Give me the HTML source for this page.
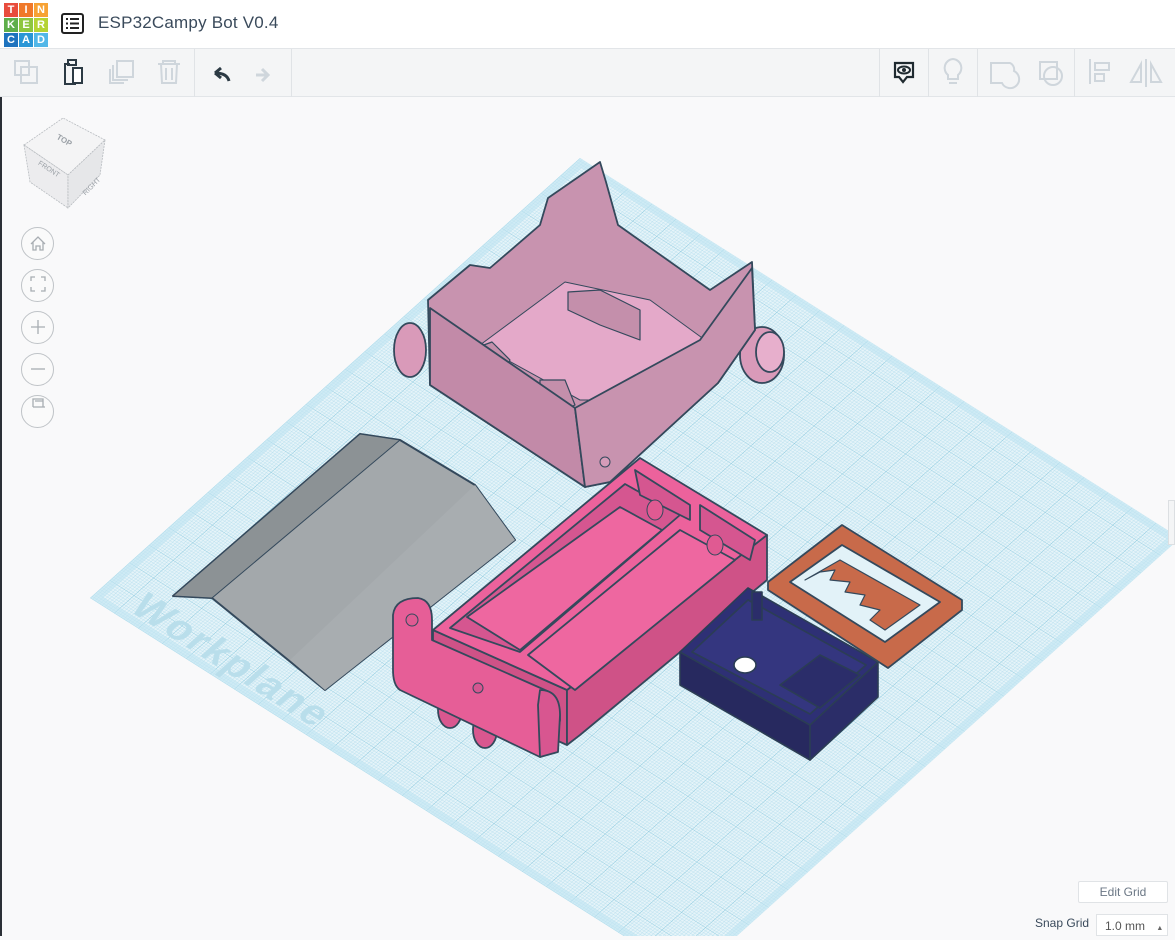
<!DOCTYPE html>
<html><head><meta charset="utf-8"><style>
*{margin:0;padding:0;box-sizing:border-box}
body{width:1175px;height:936px;overflow:hidden;background:#f9f9fa;font-family:"Liberation Sans",sans-serif;position:relative}
#hdr{position:absolute;left:0;top:0;width:1175px;height:49px;background:#fff;border-bottom:1px solid #e2e5e8}
#logo{position:absolute;left:4px;top:3px;width:44px;height:44px;display:grid;grid-template-columns:repeat(3,14px);grid-template-rows:repeat(3,14px);gap:1px}
#logo div{color:#fff;font-weight:bold;font-size:11px;text-align:center;line-height:14px}
#title{position:absolute;left:98px;top:13px;font-size:17px;color:#3a4a5b;letter-spacing:.2px}
#tb{position:absolute;left:0;top:49px;width:1175px;height:48px;background:#f4f5f6;border-bottom:1px solid #e2e5e8}
.sep{position:absolute;top:49px;width:1px;height:48px;background:#e0e3e6}
.circ{position:absolute;left:21px;width:33px;height:33px;border:1px solid #bfc3c7;border-radius:50%;background:#fafafa}
#edit{position:absolute;left:1078px;top:881px;width:90px;height:22px;border:1px solid #e0e3e6;background:#fff;color:#6b7785;font-size:12px;text-align:center;line-height:20px;border-radius:2px}
#snapl{position:absolute;left:1035px;top:916px;font-size:12px;color:#3a4a5b}
#snap{position:absolute;left:1096px;top:914px;width:72px;height:22px;border:1px solid #e0e3e6;background:#fff;color:#555;font-size:12px;line-height:22px;padding-left:8px}
</style></head><body>
<svg width="1175" height="936" style="position:absolute;left:0;top:0">
<defs>
<pattern id="g" width="10" height="10" patternUnits="userSpaceOnUse">
<rect width="10" height="10" fill="#e6f4f9"/>
<g stroke="#a6d8e9" stroke-width="0.12">
<path d="M1 0V10M2 0V10M3 0V10M4 0V10M5 0V10M6 0V10M7 0V10M8 0V10M9 0V10M0 1H10M0 2H10M0 3H10M0 4H10M0 5H10M0 6H10M0 7H10M0 8H10M0 9H10"/>
</g>
<path d="M0 0V10M0 0H10" stroke="#7cc2da" stroke-width="0.3"/>
</pattern>
</defs>
<g transform="matrix(2.4,1.52,1.96,-1.76,90,598)">
<rect x="0" y="0" width="250" height="250" fill="url(#g)"/>
<rect x="1.5" y="1.5" width="247" height="247" fill="none" stroke="#bfe5f1" stroke-width="3" opacity=".6"/>
</g>
<text transform="matrix(0.845,0.535,-0.744,0.668,128,610)" font-size="40" font-weight="bold" fill="#b9deeb" textLength="220" font-family="Liberation Sans,sans-serif">Workplane</text>

<!-- gray ramp -->
<g stroke="#34495c" stroke-width="2" stroke-linejoin="round">
<polygon points="173,596 212,598 325,690 515,540 475,485 400,440 360,434" fill="#a3a8ab"/>
<polygon points="173,596 360,434 400,440 212,598" fill="#8c9295" stroke-width="1"/>
<polygon points="290,660 475,485 515,540 325,690" fill="#a8adb0" stroke="none"/>
</g>

<!-- pink top box -->
<g stroke="#34495c" stroke-width="1.8" stroke-linejoin="round">
<ellipse cx="410" cy="350" rx="16" ry="27" fill="#d99ab9"/>
<ellipse cx="762" cy="355" rx="22" ry="28" fill="#d99ab9"/>
<ellipse cx="770" cy="352" rx="14" ry="20" fill="#e7afcc"/>
<polygon points="428,300 470,265 490,268 540,225 548,198 600,162 606,182 618,225 710,290 752,262 755,330 718,383 610,482 585,487 430,385" fill="#c893af"/>
<polygon points="480,345 565,282 650,300 705,340 600,400 580,400" fill="#e4a9c9" stroke-width="1"/>
<polygon points="568,292 600,290 640,310 640,340 600,325 568,310" fill="#c48fab" stroke-width="1.2"/>
<polygon points="540,380 565,380 575,405 560,412 540,400" fill="#c48fab" stroke-width="1.2"/>
<polygon points="470,350 492,342 510,360 498,382 480,380" fill="#c48fab" stroke-width="1.2"/>
<polygon points="430,308 575,408 585,487 430,385" fill="#c28aa8"/>
<polygon points="575,408 700,340 752,268 755,330 718,383 610,482 585,487" fill="#c893af"/>
<circle cx="605" cy="462" r="5" fill="#d59cb9" stroke-width="1"/>
</g>

<!-- magenta battery box -->
<g stroke="#34495c" stroke-width="1.8" stroke-linejoin="round">
<ellipse cx="450" cy="710" rx="12" ry="18" fill="#d9578f"/>
<ellipse cx="485" cy="730" rx="12" ry="18" fill="#d9578f"/>
<polygon points="433,630 567,690 567,745 433,685" fill="#cf5287"/>
<polygon points="567,690 767,535 767,580 580,735 567,745" fill="#cf5287"/>
<polygon points="433,630 640,458 767,535 567,690" fill="#ec629c"/>
<polygon points="450,628 625,484 680,515 520,652" fill="#d55690"/>
<polygon points="467,617 620,507 662,530 520,650" fill="#ee67a0"/>
<polygon points="528,655 680,530 735,560 575,690" fill="#ee67a0"/>
<polygon points="635,470 690,505 690,520 640,495" fill="#d55690"/>
<polygon points="700,505 755,540 750,560 700,530" fill="#d55690"/>
<ellipse cx="655" cy="510" rx="8" ry="10" fill="#e05a92" stroke-width="1"/>
<ellipse cx="715" cy="545" rx="8" ry="10" fill="#e05a92" stroke-width="1"/>
<path d="M393,615 Q395,598 418,598 Q432,600 432,620 L432,640 L545,690 Q560,695 560,720 L555,750 L540,757 L400,690 Q393,685 393,670 Z" fill="#e65e97"/>
<path d="M540,690 Q560,690 560,715 L558,752 L540,757 L538,705 Z" fill="#d85690"/>
<circle cx="412" cy="620" r="6" fill="#e05a92" stroke-width="1"/>
<circle cx="478" cy="688" r="5" fill="#d55690" stroke-width="1"/>
</g>

<!-- navy box -->
<g stroke="#2b3d55" stroke-width="1.6" stroke-linejoin="round">
<polygon points="680,652 810,725 810,760 680,685" fill="#27295f"/>
<polygon points="810,725 878,662 878,697 810,760" fill="#2b2d68"/>
<polygon points="680,652 748,588 878,662 810,725" fill="#2e3075"/>
<polygon points="692,652 748,600 866,665 810,714" fill="#34367f"/>
<polygon points="752,592 762,592 762,620 752,620" fill="#2b2d6a"/>
<ellipse cx="745" cy="665" rx="11" ry="8" fill="#fff"/>
<polygon points="780,685 820,655 860,675 820,708" fill="#2b2d6a"/>
</g>

<!-- orange frame -->
<g stroke="#34495c" stroke-width="1.8" stroke-linejoin="round">
<polygon points="768,582 842,525 962,600 962,610 888,668 768,590" fill="#c86a4a"/>
<polygon points="790,582 842,545 940,602 885,642" fill="#e2f2f8"/>
<polygon points="805,580 840,560 920,605 885,630 870,620 880,610 860,605 865,595 845,592 850,582 830,580 835,570 820,572" fill="#c86a4a" stroke-width="1.2"/>
</g>

<!-- nav cube -->
<g stroke="#b8bcc0" stroke-width="0.8" stroke-dasharray="2,1">
<polygon points="24,145 63,118 105,140 68,175" fill="#f4f4f5"/>
<polygon points="24,145 68,175 68,208 30,182" fill="#ececee"/>
<polygon points="68,175 105,140 100,175 68,208" fill="#e6e7e9"/>
</g>
<text x="55" y="142" font-size="8" fill="#9aa0a6" transform="rotate(30 62 142)" font-weight="bold">TOP</text>
<text x="33" y="170" font-size="7" fill="#9aa0a6" transform="rotate(33 45 175)">FRONT</text>
<text x="74" y="192" font-size="7" fill="#9aa0a6" transform="rotate(-45 84 180)">RIGHT</text>
</svg>

<div id="hdr">
<div id="logo">
<div style="background:#e84c3d">T</div><div style="background:#f0792a">I</div><div style="background:#f7a234">N</div>
<div style="background:#5fae4a">K</div><div style="background:#8dc63f">E</div><div style="background:#b5d334">R</div>
<div style="background:#1e73be">C</div><div style="background:#2a96d6">A</div><div style="background:#52b7e8">D</div>
</div>
<svg style="position:absolute;left:61px;top:13px" width="24" height="22"><rect x="1" y="1" width="21" height="19" rx="2" fill="none" stroke="#222" stroke-width="2"/><path d="M5 6h2M9 6h9M5 10.5h2M9 10.5h9M5 15h2M9 15h9" stroke="#222" stroke-width="2"/></svg>
<div id="title">ESP32Campy Bot V0.4</div>
</div>
<div id="tb"></div>
<div class="sep" style="left:194px"></div><div class="sep" style="left:291px"></div>
<div class="sep" style="left:879px"></div><div class="sep" style="left:928px"></div><div class="sep" style="left:977px"></div><div class="sep" style="left:1074px"></div>
<svg style="position:absolute;left:0;top:49px" width="1175" height="48">
<g fill="none" stroke="#cfd6dc" stroke-width="2">
<rect x="15" y="12" width="14" height="14"/><rect x="21" y="18" width="16" height="16"/>
<rect x="117" y="12" width="16" height="16"/><path d="M113 16v15h15M110 20v14h14"/>
<path d="M158 15h22M163 15v-3h12v3M161 15l1 19h14l1-19M166 19v12M172 19v12"/>
<path d="M268 26h-12M262 20l6 6-6 6" stroke-width="3"/>
<path d="M953 10a9 9 0 0 1 5 16v4h-10v-4a9 9 0 0 1 5-16zM949 34h8"/>
<path d="M991 14h19a7 7 0 0 1 4 8 9 9 0 1 1-12 12h-11z"/>
<rect x="1040" y="13" width="17" height="17"/><circle cx="1053" cy="27" r="9"/>
<path d="M1090 10v25M1095 14h14v7h-14zM1095 25h9v7h-9z"/>
<path d="M1146 10v28M1141 15l-10 18h10zM1151 15l10 18h-10z"/>
</g>
<path d="M70 15h-5v20h11" fill="none" stroke="#2c3a44" stroke-width="2"/>
<rect x="68" y="11" width="8" height="5" fill="none" stroke="#2c3a44" stroke-width="2"/>
<rect x="73" y="19" width="9" height="15" fill="#fff" stroke="#2c3a44" stroke-width="2"/>
<path d="M229 32q-2-8-14-8M215 24l6-5M215 24l6 5" fill="none" stroke="#2c3a44" stroke-width="3"/>
<path d="M895 14h18v14h-6l-4 5-4-5h-4z" fill="none" stroke="#1f2a30" stroke-width="2.2"/>
<ellipse cx="904" cy="21" rx="6" ry="3.5" fill="none" stroke="#1f2a30" stroke-width="2"/><circle cx="904" cy="21" r="2" fill="#1f2a30"/>
</svg>
<div style="position:absolute;left:0;top:97px;width:2px;height:839px;background:#2b2f36"></div>

<div class="circ" style="top:227px"></div><div class="circ" style="top:269px"></div><div class="circ" style="top:311px"></div><div class="circ" style="top:353px"></div><div class="circ" style="top:395px"></div>
<svg style="position:absolute;left:21px;top:227px" width="34" height="200"><g fill="none" stroke="#a8adb2" stroke-width="1.3">
<path d="M10 17l7-7 7 7M12 15v8h3v-4h4v4h3v-8"/>
<path d="M10 54v-4h4M20 50h4v4M24 60v4h-4M14 64h-4v-4"/>
<path d="M17 93v14M10 100h14"/>
<path d="M10 142h14"/>
<path d="M12 180v-8h10v8M12 180h12M14 174h8" /></g></svg>

<div style="position:absolute;left:1168px;top:500px;width:7px;height:45px;border:1px solid #dcdfe2;background:#f4f5f6"></div>
<div id="edit">Edit Grid</div>
<div id="snapl">Snap Grid</div>
<div id="snap">1.0 mm <span style="font-size:7px;color:#666;margin-left:8px">▲</span></div>
</body></html>
